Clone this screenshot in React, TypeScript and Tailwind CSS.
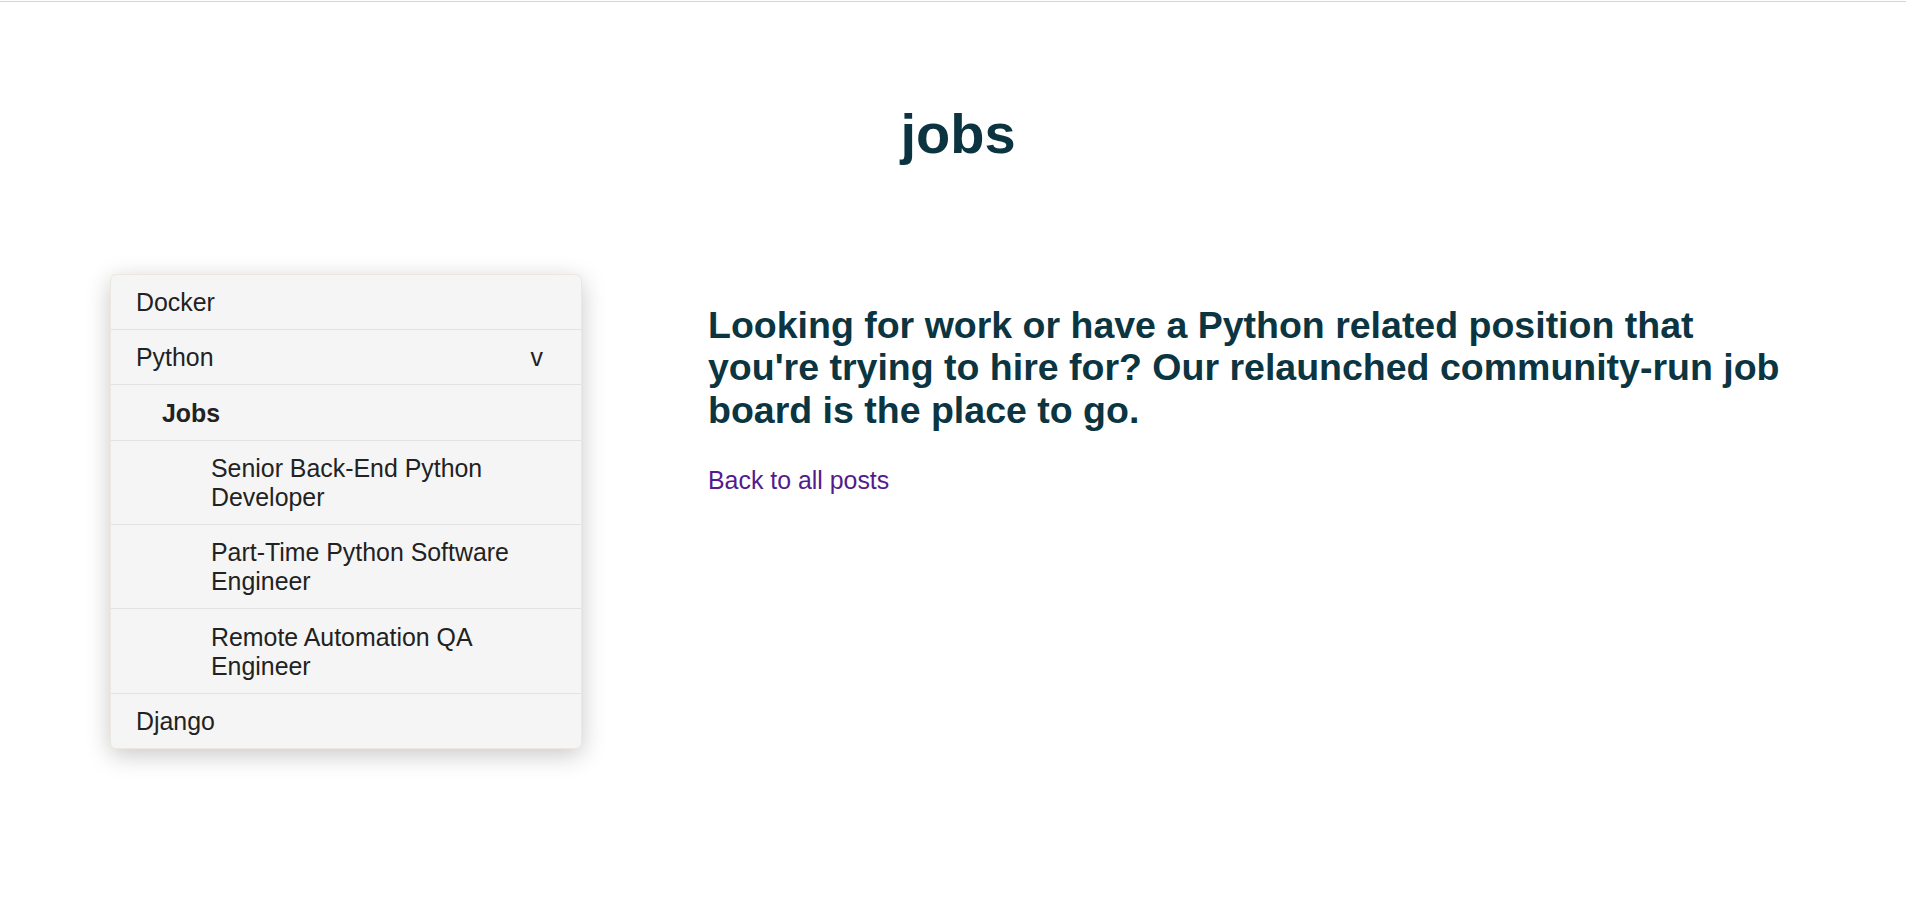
import React from "react";

const font = { fontFamily: '"Liberation Sans", Arial, sans-serif' };

type Row = { label: string; level: 0 | 1 | 2; bold?: boolean; caret?: boolean };

const rows: Row[] = [
  { label: "Docker", level: 0 },
  { label: "Python", level: 0, caret: true },
  { label: "Jobs", level: 1, bold: true },
  { label: "Senior Back-End Python Developer", level: 2 },
  { label: "Part-Time Python Software Engineer", level: 2 },
  { label: "Remote Automation QA Engineer", level: 2 },
  { label: "Django", level: 0 },
];

function Sidebar() {
  return (
    <div className="w-[472px] shrink-0 rounded-[6px] border border-[#ece7df] bg-[#f5f5f5] shadow-[0_6px_24px_rgba(0,0,0,0.22)] overflow-hidden">
      {rows.map((r, i) => (
        <div
          key={r.label}
          className={
            "flex items-start pt-[13.6px] pb-[11.75px] text-[24.9px] leading-[29px] text-[#222222] " +
            (i < rows.length - 1 ? "border-b border-[#e2e2e2] " : "") +
            (r.level === 0 ? "pl-[25px] " : r.level === 1 ? "pl-[51px] " : "pl-[100px] ") +
            "pr-[38px]"
          }
        >
          <span className={"flex-1 " + (r.bold ? "font-bold" : "")}>{r.label}</span>
          {r.caret && <span className="text-[#222222]">v</span>}
        </div>
      ))}
    </div>
  );
}

export default function App() {
  return (
    <div className="min-h-screen bg-white" style={font}>
      <div className="pt-[1px]">
        <div className="h-[1px] bg-[#d4d4d4]" />
      </div>
      <h1 className="mt-[99.5px] pl-[10px] text-center text-[56px] font-bold leading-[64px] text-[#0b3440]">
        jobs
      </h1>
      <div className="mt-[108px] flex pl-[110px]">
        <Sidebar />
        <div className="ml-[126px] w-[1090px] pt-[30px]">
          <p className="text-[37.5px] font-bold leading-[42.5px] text-[#0b3541]">
            Looking for work or have a Python related position that you're trying to hire for? Our
            relaunched community-run job board is the place to go.
          </p>
          <a href="#" className="mt-[34.5px] block text-[24.9px] leading-[29px] text-[#551a8b]">
            Back to all posts
          </a>
        </div>
      </div>
    </div>
  );
}
